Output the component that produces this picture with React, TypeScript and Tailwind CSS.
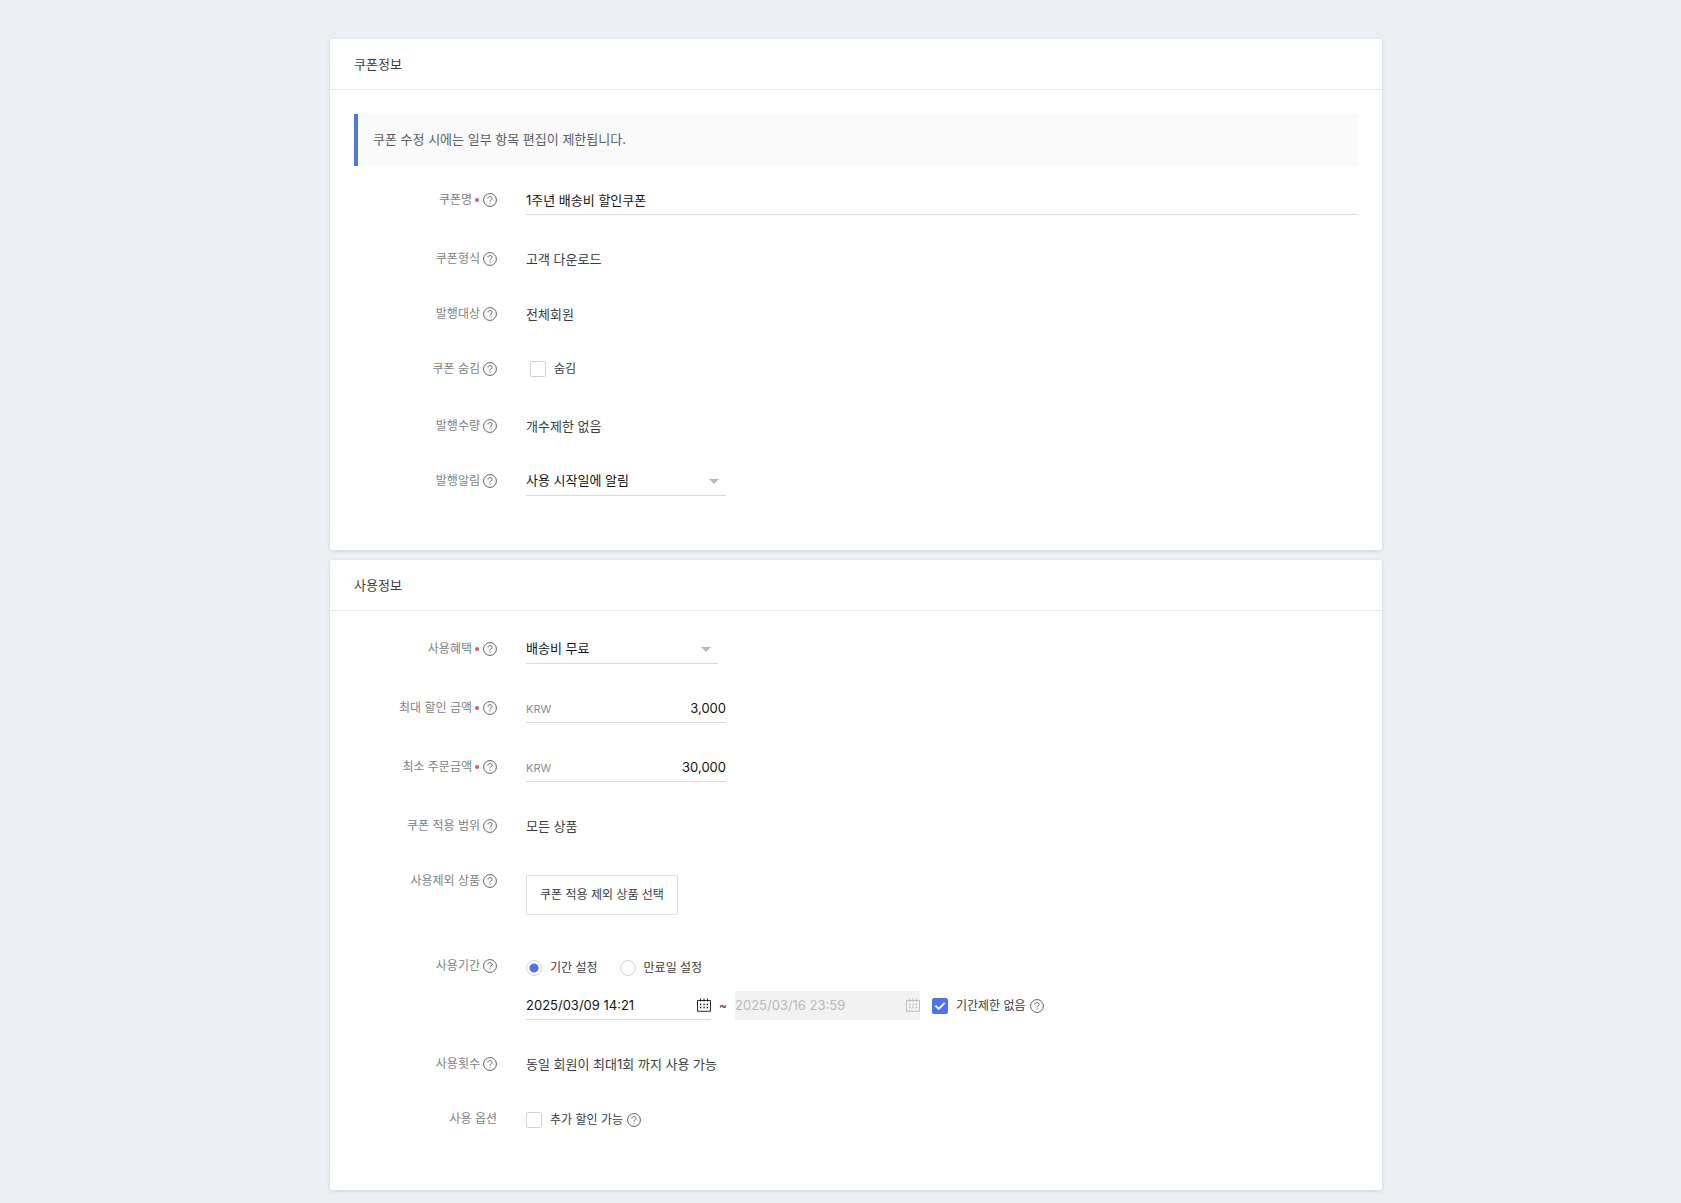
import { useState } from "react";
import type { ReactNode } from "react";

const HelpIcon = () => {
  return (
    <button type="button" aria-label="도움말" className="block shrink-0 text-[#5f6163]">
      <svg width="14" height="14" viewBox="0 0 14 14" fill="none" stroke="currentColor" className="block">
        <circle cx="7" cy="7" r="6.4" strokeWidth="1" />
        <path d="M4.9 5.5C4.9 4.3 5.8 3.6 7 3.6s2.1.7 2.1 1.8c0 1.5-2.1 1.5-2.1 3" strokeWidth="1" />
        <path d="M7 9.4v1.2" strokeWidth="1.1" />
      </svg>
    </button>
  );
};

const CalendarIcon = () => {
  return (
    <svg width="14" height="14" viewBox="0 0 14 14" fill="none" stroke="currentColor" className="block shrink-0">
      <path d="M.5 2.5h13v10.8H.5z" strokeWidth="0.9" />
      <path d="M3.5 .5v3M7 .5v3M10.5 .5v3" strokeWidth="0.9" />
      <path d="M3 6.5h1.3M6.4 6.5h1.3M9.7 6.5H11M3 9.5h1.3M6.4 9.5h1.3M9.7 9.5H11" strokeWidth="1.3" />
    </svg>
  );
};

type CardProps = { title: string; children: ReactNode };

const Card = ({ title, children }: CardProps) => {
  return (
    <section className="w-full rounded-[2px] bg-white shadow-[0_1px_4px_rgba(0,0,0,0.12)]">
      <header className="border-b border-[#e9eaeb] px-6 py-[15px]">
        <h2 className="text-[13px] leading-5 text-[#3a3d40]">{title}</h2>
      </header>
      <div className="p-6">{children}</div>
    </section>
  );
};

type RowProps = {
  label: string;
  htmlFor?: string;
  required?: boolean;
  help?: boolean;
  children: ReactNode;
};

const Row = ({ label, htmlFor, required, help = true, children }: RowProps) => {
  return (
    <div className="mb-[30px] flex items-start gap-[29px]">
      <div className="flex h-[25px] w-[143px] shrink-0 items-center justify-end gap-[3px] pt-0.5 text-xs text-[#808284]">
        {htmlFor ? <label htmlFor={htmlFor}>{label}</label> : <span>{label}</span>}
        {required && <i className="mr-px h-1 w-1 rounded-full bg-[#dd5a5a]" />}
        {help && <HelpIcon />}
      </div>
      <div className="min-w-0 flex-1 text-[13px] text-[#3a3d40]">{children}</div>
    </div>
  );
};

const Value = ({ children }: { children: ReactNode }) => {
  return <p className="pb-px pt-1 leading-5">{children}</p>;
};

type SelectProps = { id: string; width: string; options: string[] };

const Select = ({ id, width, options }: SelectProps) => {
  return (
    <div className={`relative ${width}`}>
      <select
        id={id}
        className="block h-[29px] w-full appearance-none border-b border-[#d9dbdd] bg-transparent pr-6 text-[#141414] outline-none"
      >
        {options.map((option) => (
          <option key={option}>{option}</option>
        ))}
      </select>
      <svg width="10" height="5" viewBox="0 0 10 5" className="pointer-events-none absolute right-[7px] top-3">
        <path d="M0 0h10L5 5z" fill="#b8babb" />
      </svg>
    </div>
  );
};

type MoneyProps = { id: string; value: string; onChange: (value: string) => void };

const MoneyInput = ({ id, value, onChange }: MoneyProps) => {
  return (
    <div className="flex h-[29px] w-[200px] items-center border-b border-[#d9dbdd] pt-0.5">
      <span className="text-[11px] text-[#8c8e90]">KRW</span>
      <input
        id={id}
        type="text"
        value={value}
        onChange={(e) => onChange(e.target.value)}
        className="min-w-0 flex-1 bg-transparent text-right text-[#141414] outline-none"
      />
    </div>
  );
};

type CheckProps = { label: string; checked: boolean; onChange: (checked: boolean) => void };

const Checkbox = ({ label, checked, onChange }: CheckProps) => {
  return (
    <label className="flex items-center gap-2 text-xs">
      <span className="relative block">
        <input
          type="checkbox"
          checked={checked}
          onChange={(e) => onChange(e.target.checked)}
          className="block h-4 w-4 appearance-none rounded-[2px] border border-[#cfd5d6] bg-white checked:border-[#5070f5] checked:bg-[#5070f5]"
        />
        {checked && (
          <svg width="16" height="16" viewBox="0 0 16 16" fill="none" className="pointer-events-none absolute inset-0">
            <path d="M3.5 7.8l3.2 3.1 6-6.1" stroke="#fff" strokeWidth="1.9" />
          </svg>
        )}
      </span>
      {label}
    </label>
  );
};

type RadioProps = { label: string; name: string; checked: boolean; onChange: () => void };

const Radio = ({ label, name, checked, onChange }: RadioProps) => {
  return (
    <label className="flex items-center gap-2 text-xs">
      <input
        type="radio"
        name={name}
        checked={checked}
        onChange={onChange}
        className="block h-4 w-4 appearance-none rounded-full border border-[#cfd5d6] bg-white checked:bg-[radial-gradient(circle,#5070f5_0,#5070f5_4px,transparent_5px)]"
      />
      {label}
    </label>
  );
};

type DateProps = { label: string; value: string; disabled?: boolean; onChange?: (value: string) => void };

const DateInput = ({ label, value, disabled, onChange }: DateProps) => {
  return (
    <div
      className={
        disabled
          ? "flex h-[29px] w-[185px] items-center border-b border-[#f2f2f2] bg-[#f2f2f2] text-[#b9b9b9]"
          : "flex h-[29px] w-[185px] items-center border-b border-[#d9dbdd] text-[#141414]"
      }
    >
      <input
        type="text"
        aria-label={label}
        value={value}
        disabled={disabled}
        onChange={(e) => onChange?.(e.target.value)}
        className="min-w-0 flex-1 bg-transparent pt-0.5 outline-none"
      />
      <CalendarIcon />
    </div>
  );
};

export default function App() {
  const [name, setName] = useState("1주년 배송비 할인쿠폰");
  const [hidden, setHidden] = useState(false);
  const [maxDiscount, setMaxDiscount] = useState("3,000");
  const [minOrder, setMinOrder] = useState("30,000");
  const [period, setPeriod] = useState<"range" | "expire">("range");
  const [startDate, setStartDate] = useState("2025/03/09 14:21");
  const [endDate, setEndDate] = useState("2025/03/16 23:59");
  const [noLimit, setNoLimit] = useState(true);
  const [extra, setExtra] = useState(false);

  return (
    <main className="min-h-screen bg-[#ecf0f5] pb-[13px] pl-[31px] pt-[39px] font-['Inter','Noto_Sans_CJK_KR',sans-serif]">
      <form className="mx-auto flex w-full max-w-[1052px] flex-col gap-[10px]" onSubmit={(e) => e.preventDefault()}>
        <Card title="쿠폰정보">
          <p className="mb-5 border-l-4 border-[#4f7bd5] bg-[#fafafa] px-[15px] pb-[17px] pt-[15px] text-[13px] leading-5 text-[#5c5e60]">
            쿠폰 수정 시에는 일부 항목 편집이 제한됩니다.
          </p>

          <Row label="쿠폰명" htmlFor="name" required>
            <input
              id="name"
              type="text"
              value={name}
              onChange={(e) => setName(e.target.value)}
              className="block h-[29px] w-full border-b border-[#d9dbdd] pb-0.5 text-[#141414] outline-none"
            />
          </Row>
          <Row label="쿠폰형식">
            <Value>고객 다운로드</Value>
          </Row>
          <Row label="발행대상">
            <Value>전체회원</Value>
          </Row>
          <Row label="쿠폰 숨김">
            <div className="flex h-[27px] items-center pl-1">
              <Checkbox label="숨김" checked={hidden} onChange={setHidden} />
            </div>
          </Row>
          <Row label="발행수량">
            <Value>개수제한 없음</Value>
          </Row>
          <Row label="발행알림" htmlFor="notice">
            <Select id="notice" width="w-[200px]" options={["사용 시작일에 알림"]} />
          </Row>
        </Card>

        <Card title="사용정보">
          <Row label="사용혜택" htmlFor="benefit" required>
            <Select id="benefit" width="w-[192px]" options={["배송비 무료"]} />
          </Row>
          <Row label="최대 할인 금액" htmlFor="max" required>
            <MoneyInput id="max" value={maxDiscount} onChange={setMaxDiscount} />
          </Row>
          <Row label="최소 주문금액" htmlFor="min" required>
            <MoneyInput id="min" value={minOrder} onChange={setMinOrder} />
          </Row>
          <Row label="쿠폰 적용 범위">
            <Value>모든 상품</Value>
          </Row>
          <Row label="사용제외 상품">
            <div className="pb-[7px] pt-2">
              <button type="button" className="block h-10 rounded-[1px] border border-[#dcdedf] px-[13px] text-xs">
                쿠폰 적용 제외 상품 선택
              </button>
            </div>
          </Row>
          <Row label="사용기간">
            <div className="flex gap-[22px] pb-[15px] pt-2">
              <Radio label="기간 설정" name="period" checked={period === "range"} onChange={() => setPeriod("range")} />
              <Radio label="만료일 설정" name="period" checked={period === "expire"} onChange={() => setPeriod("expire")} />
            </div>
            <div className="flex items-center">
              <DateInput label="시작일" value={startDate} onChange={setStartDate} />
              <span className="w-6 text-center text-xs">~</span>
              <DateInput label="종료일" value={endDate} disabled={noLimit} onChange={setEndDate} />
              <div className="ml-3 flex items-center gap-1">
                <Checkbox label="기간제한 없음" checked={noLimit} onChange={setNoLimit} />
                <HelpIcon />
              </div>
            </div>
          </Row>
          <Row label="사용횟수">
            <Value>동일 회원이 최대1회 까지 사용 가능</Value>
          </Row>
          <Row label="사용 옵션" help={false}>
            <div className="flex h-[31px] items-center gap-1 pb-0.5">
              <Checkbox label="추가 할인 가능" checked={extra} onChange={setExtra} />
              <HelpIcon />
            </div>
          </Row>
        </Card>
      </form>
    </main>
  );
}
